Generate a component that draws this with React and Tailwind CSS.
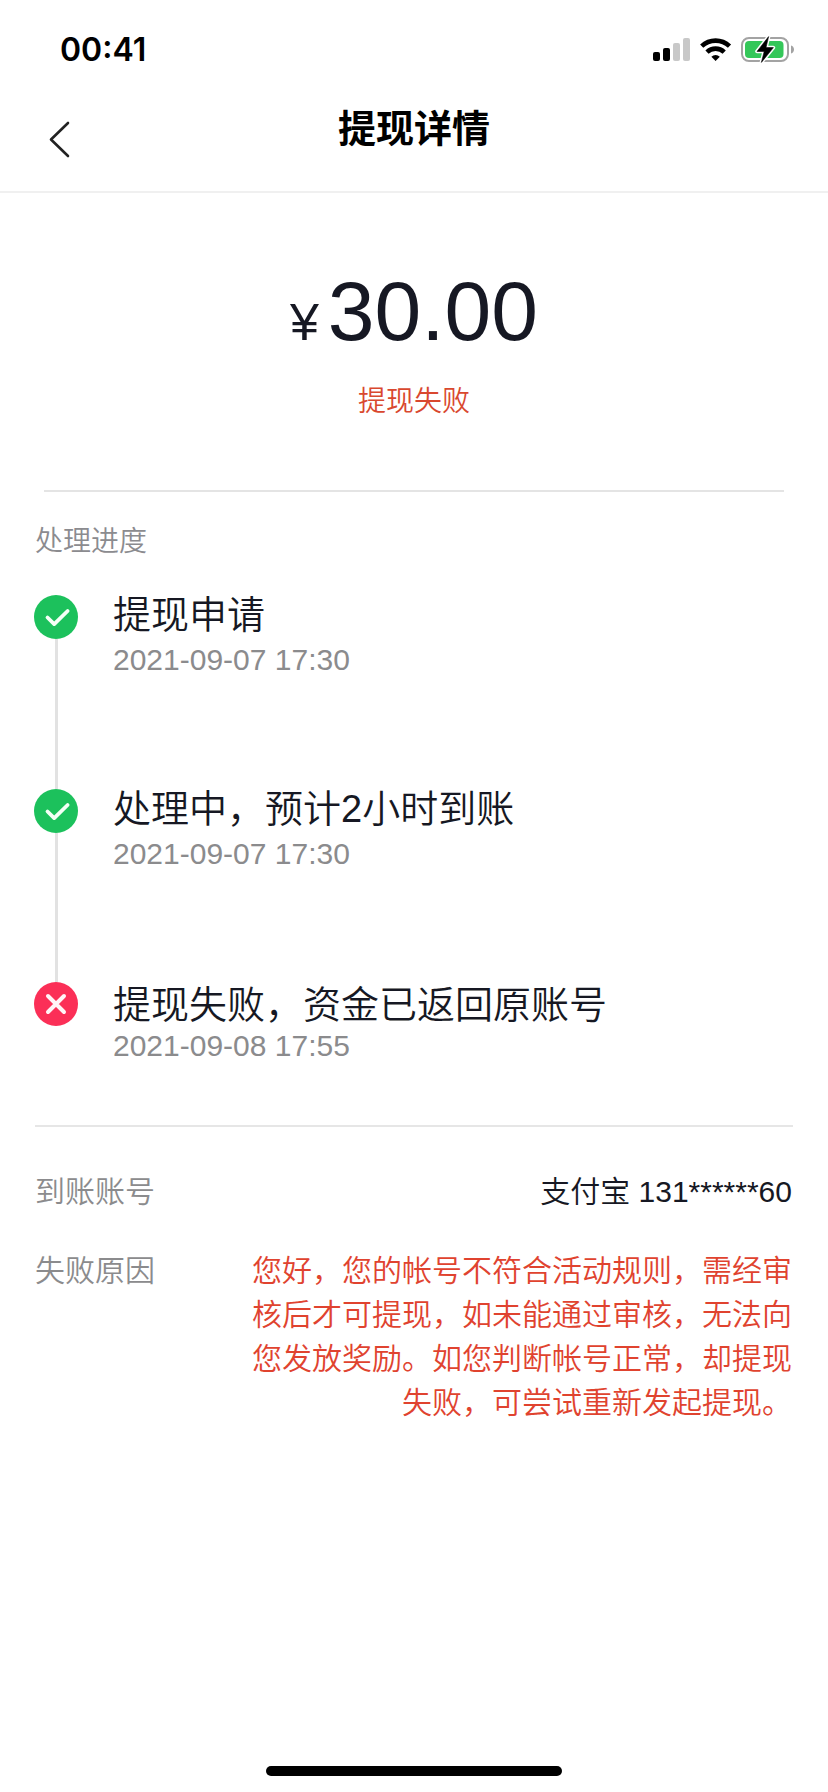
const steps = [
  { title: '提现申请', time: '2021-09-07 17:30', state: 'done', box: 'h-[194px]', text: 'mt-[-6px]', gap: 'mt-[-2px]' },
  { title: '处理中，预计2小时到账', time: '2021-09-07 17:30', state: 'done', box: 'h-[193px]', text: 'mt-[-6px]', gap: 'mt-[-2px]' },
  { title: '提现失败，资金已返回原账号', time: '2021-09-08 17:55', state: 'failed', box: 'h-[143px]', text: 'mt-[-3px]', gap: 'mt-[-6px]' },
];

function StatusBar() {
  return (
    <div className="flex h-[99px] items-center justify-between pl-[60px] pr-[33px]">
      <span className="font-[Inter,sans-serif] text-[32px] font-semibold leading-none text-black">00:41</span>
      <svg className="h-[32px] w-[144px]" viewBox="651 34 144 32">
        <rect x="653" y="52" width="7" height="9" rx="2" fill="#000" />
        <rect x="663" y="48" width="7" height="13" rx="2" fill="#000" />
        <rect x="673" y="43" width="7" height="18" rx="2" fill="#c8c8c8" />
        <rect x="683" y="38" width="7" height="23" rx="2" fill="#c8c8c8" />
        <g fill="none" stroke="#000" strokeWidth="4.6">
          <path d="M701.7 46.2a20.2 20.2 0 0 1 27.8 0" />
          <path d="M707 52.1a12.4 12.4 0 0 1 17.2 0" />
        </g>
        <path d="M715.6 61l-4.2-4.3a6.2 6.2 0 0 1 8.4 0z" fill="#000" />
        <rect x="742" y="38" width="46" height="23" rx="7" fill="#fff" stroke="#a3a3a3" strokeWidth="2" />
        <rect x="745" y="41" width="38.5" height="17" rx="4" fill="#34c759" />
        <path d="M791 45.5c4 1 4 7 0 8z" fill="#a3a3a3" />
        <path d="M768.6 36.6L757 51.4h7.2L761.4 62.4L773.4 47.6h-7.4z" fill="#000" stroke="#fff" strokeWidth="3.6" strokeLinejoin="round" />
        <path d="M768.6 36.6L757 51.4h7.2L761.4 62.4L773.4 47.6h-7.4z" fill="#000" stroke="#000" strokeWidth="0.6" />
      </svg>
    </div>
  );
}

function StepIcon({ state }) {
  const done = state === 'done';
  return (
    <svg className="size-[44px] shrink-0" viewBox="0 0 44 44">
      <circle cx="22" cy="22" r="22" fill={done ? '#1cc15c' : '#fb2f57'} />
      {done ? (
        <path d="M13.5 22.5l6.7 6.6L33.6 16" fill="none" stroke="#f4fff6" strokeWidth="3.8" strokeLinecap="round" strokeLinejoin="round" />
      ) : (
        <path d="M14 14l16 16M30 14L14 30" fill="none" stroke="#fff5f7" strokeWidth="4" strokeLinecap="round" />
      )}
    </svg>
  );
}

export default function App() {
  return (
    <div className="flex h-[1792px] w-[828px] flex-col bg-white font-['Liberation_Sans','Noto_Sans_CJK_SC',sans-serif] font-[350] text-[#161823]">
      <StatusBar />
      <header className="grid h-[94px] grid-cols-[1fr_auto_1fr] items-start border-b-2 border-[#f0f0f0]">
        <svg className="ml-[47px] mt-[20px] h-[40px] w-[26px]" viewBox="0 0 26 40" fill="none" stroke="#222" strokeWidth="2.6" strokeLinecap="round" strokeLinejoin="round">
          <path d="M21 4L4 20.5L21 37" />
        </svg>
        <h1 className="mt-px text-[38px] font-bold leading-[58px] text-black">提现详情</h1>
      </header>

      <section className="flex flex-col items-center pt-[70px]">
        <div className="flex h-[96px] items-baseline gap-[9px] leading-[96px]">
          <span className="text-[52px]">¥</span>
          <span className="text-[84px]">30.00</span>
        </div>
        <p className="mt-[23px] text-[28px] leading-[40px] text-[#d9482f]">提现失败</p>
      </section>
      <hr className="mx-[44px] mt-[68px] border-0 border-t-2 border-[#e4e4e4]" />

      <section className="pl-[34px]">
        <h2 className="mt-[30px] pl-px text-[28px] font-[350] leading-[40px] text-[#8b8b8f]">处理进度</h2>
        <ol className="mt-[33px]">
          {steps.map((s, i) => (
            <li key={i} className={`flex gap-[35px] ${s.box}`}>
              <div className="flex flex-col items-center">
                <StepIcon state={s.state} />
                {i < 2 && <div className="w-[3px] grow bg-[#e2e2e2]" />}
              </div>
              <div className={s.text}>
                <p className="text-[38px] leading-[52px]">{s.title}</p>
                <p className={`text-[30px] leading-[42px] text-[#8b8b8d] ${s.gap}`}>{s.time}</p>
              </div>
            </li>
          ))}
        </ol>
      </section>
      <hr className="mx-[35px] border-0 border-t-2 border-[#e6e6e6]" />

      <dl className="flex flex-col gap-[35px] pl-[35px] pr-[36px] pt-[43px] text-[30px] leading-[44px]">
        <div className="flex justify-between">
          <dt className="text-[#8b8b8d]">到账账号</dt>
          <dd>支付宝 131******60</dd>
        </div>
        <div className="flex justify-between">
          <dt className="text-[#8b8b8d]">失败原因</dt>
          <dd className="w-[540px] text-right text-[#e0432f]">
            您好，您的帐号不符合活动规则，需经审核后才可提现，如未能通过审核，无法向您发放奖励。如您判断帐号正常，却提现失败，可尝试重新发起提现。
          </dd>
        </div>
      </dl>

      <div className="mx-auto mb-[16px] mt-auto h-[10px] w-[296px] rounded-full bg-black" />
    </div>
  );
}
